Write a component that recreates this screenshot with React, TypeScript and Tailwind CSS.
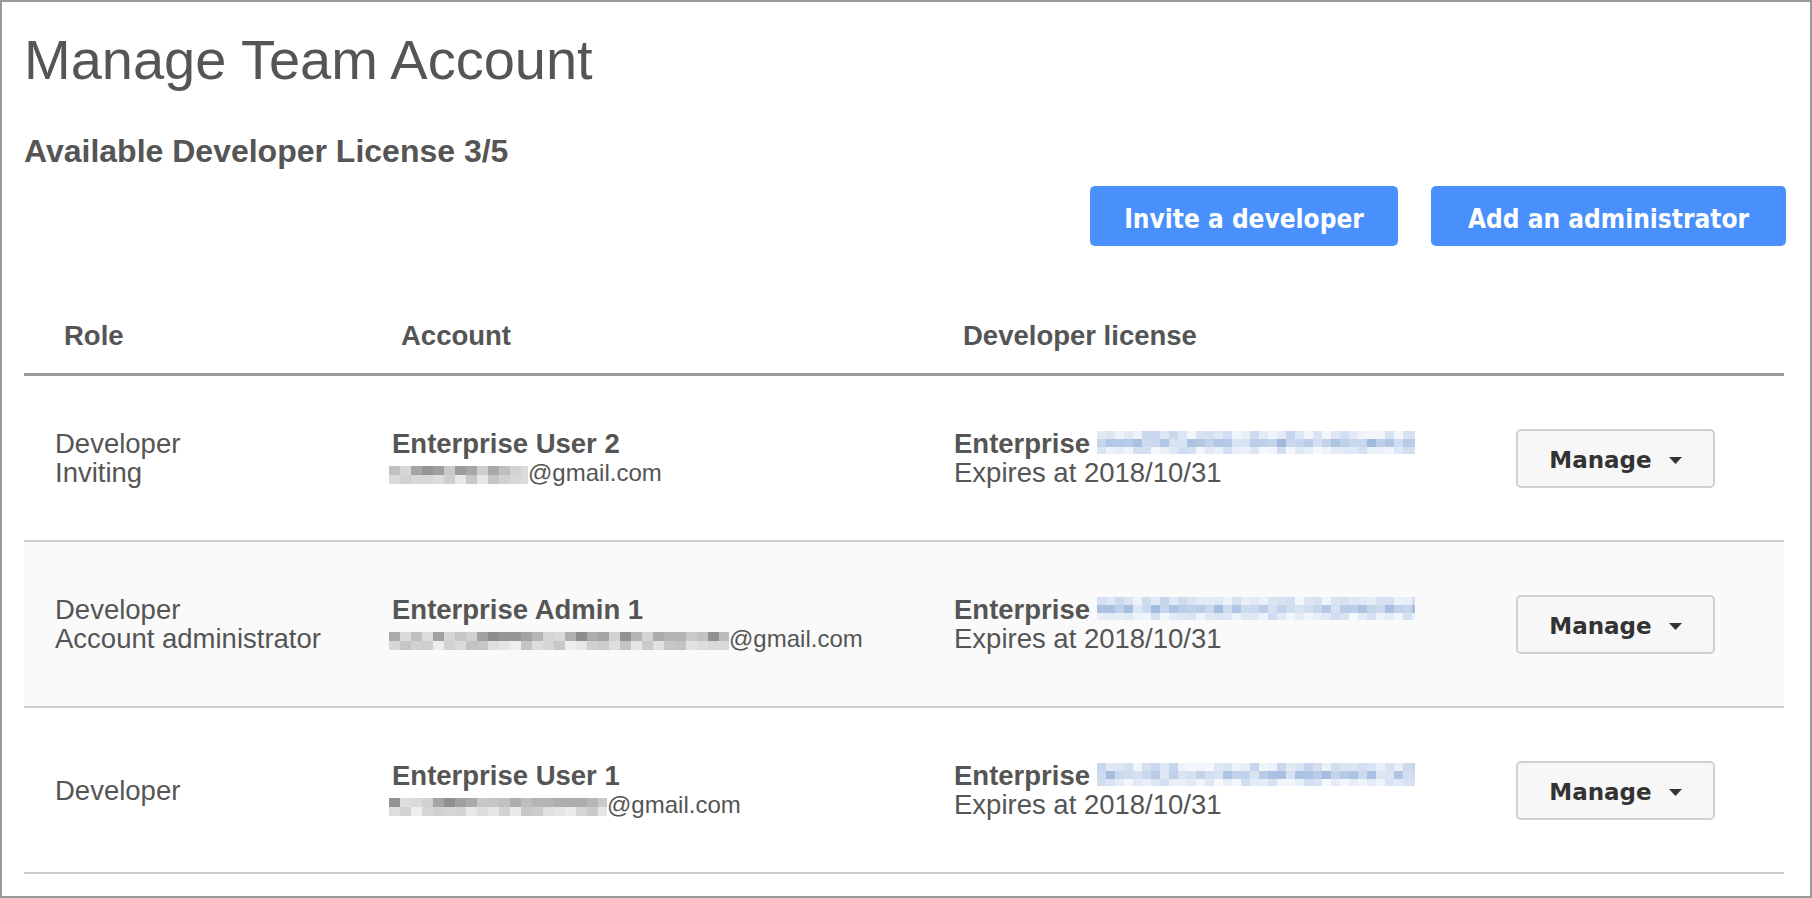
import React from "react";

function makeRand(seed: number) {
  let s = seed;
  return () => {
    s = (s * 9301 + 49297) % 233280;
    return s / 233280;
  };
}

type RowSpec = { h: number; from: [number, number, number]; to: [number, number, number] };

function Mosaic({ width, seed, rows, cell = 9 }: { width: number; seed: number; rows: RowSpec[]; cell?: number }) {
  const rnd = makeRand(seed);
  const cols = Math.ceil(width / cell);
  return (
    <div className="flex flex-col shrink-0 overflow-hidden" style={{ width }}>
      {rows.map((r, ri) => (
        <div key={ri} className="flex" style={{ height: r.h }}>
          {Array.from({ length: cols }).map((_, ci) => {
            const t = rnd();
            const c = r.from.map((v, i) => Math.round(v + (r.to[i] - v) * t));
            return (
              <div
                key={ci}
                className="shrink-0"
                style={{ width: cell, backgroundColor: `rgb(${c[0]},${c[1]},${c[2]})` }}
              />
            );
          })}
        </div>
      ))}
    </div>
  );
}

const grayRows: RowSpec[] = [
  { h: 9, from: [140, 140, 140], to: [222, 222, 222] },
  { h: 9, from: [195, 195, 195], to: [240, 240, 240] },
];

const blueRows: RowSpec[] = [
  { h: 8, from: [195, 211, 235], to: [244, 247, 252] },
  { h: 8, from: [160, 186, 222], to: [220, 230, 244] },
  { h: 7, from: [208, 221, 240], to: [246, 249, 253] },
];

function Caret() {
  return (
    <svg width="13" height="7" viewBox="0 0 13 7" className="shrink-0">
      <path d="M0 0 L13 0 L6.5 7 Z" fill="#333" />
    </svg>
  );
}

type Row = {
  role: string[];
  name: string;
  mosaicW: number;
  seed: number;
  shaded?: boolean;
};

const rows: Row[] = [
  { role: ["Developer", "Inviting"], name: "Enterprise User 2", mosaicW: 139, seed: 11 },
  { role: ["Developer", "Account administrator"], name: "Enterprise Admin 1", mosaicW: 340, seed: 29, shaded: true },
  { role: ["Developer"], name: "Enterprise User 1", mosaicW: 218, seed: 47 },
];

export default function App() {
  return (
    <div className="w-[1812px] h-[898px] box-border border-2 border-[#999] bg-white font-['Liberation_Sans',Arial,sans-serif] text-[#555] px-[22px] overflow-hidden">
      <h1 className="pt-[30px] text-[56px] leading-[55px] font-normal">Manage Team Account</h1>
      <h2 className="mt-[48px] text-[32px] leading-[32px] font-bold">Available Developer License 3/5</h2>

      <div className="mt-[19px] flex justify-end gap-[33px] pr-[2px]">
        <button className="w-[308px] h-[60px] rounded-[5px] bg-[#4a90fd] text-white font-['DejaVu_Sans',sans-serif] [font-stretch:condensed] font-bold text-[26px] pt-[6px]">
          Invite a developer
        </button>
        <button className="w-[355px] h-[60px] rounded-[5px] bg-[#4a90fd] text-white font-['DejaVu_Sans',sans-serif] [font-stretch:condensed] font-bold text-[26px] pt-[6px]">
          Add an administrator
        </button>
      </div>

      <div className="w-[1760px]">
        <div className="grid grid-cols-[337px_562px_562px_299px] h-[130px] items-end border-b-[3px] border-[#9a9a9a] pb-[22px] font-bold text-[27.5px] leading-[30px]">
          <div className="pl-[40px]">Role</div>
          <div className="pl-[40px]">Account</div>
          <div className="pl-[40px]">Developer license</div>
          <div />
        </div>

        {rows.map((r, i) => (
          <div
            key={i}
            className={`grid grid-cols-[337px_562px_562px_299px] h-[166px] items-center border-b-2 border-[#cccccc] text-[27.5px] leading-[29px] ${r.shaded ? "bg-[#fafafa]" : "bg-white"}`}
          >
            <div className="pl-[31px]">
              {r.role.map((l, j) => (
                <div key={j}>{l}</div>
              ))}
            </div>
            <div className="pl-[31px]">
              <div className="font-bold">{r.name}</div>
              <div className="flex items-center -ml-[3px] text-[24px]">
                <div className="mt-[5px]">
                  <Mosaic width={r.mosaicW} seed={r.seed} rows={grayRows} cell={11} />
                </div>
                <span>@gmail.com</span>
              </div>
            </div>
            <div className="pl-[31px]">
              <div className="flex items-center">
                <span className="font-bold">Enterprise</span>
                <div className="ml-[7px] -mt-[2px]">
                  <Mosaic width={318} seed={r.seed + 100} rows={blueRows} cell={9} />
                </div>
              </div>
              <div>Expires at 2018/10/31</div>
            </div>
            <div className="pl-[31px]">
              <button className="w-[199px] h-[59px] rounded-[5px] border-2 border-[#d0d0d0] bg-[#f7f7f7] flex items-center justify-center gap-[17px] pt-[5px] font-['DejaVu_Sans',sans-serif] font-bold text-[23px] text-[#333]">
                <span>Manage</span>
                <Caret />
              </button>
            </div>
          </div>
        ))}
      </div>
    </div>
  );
}
